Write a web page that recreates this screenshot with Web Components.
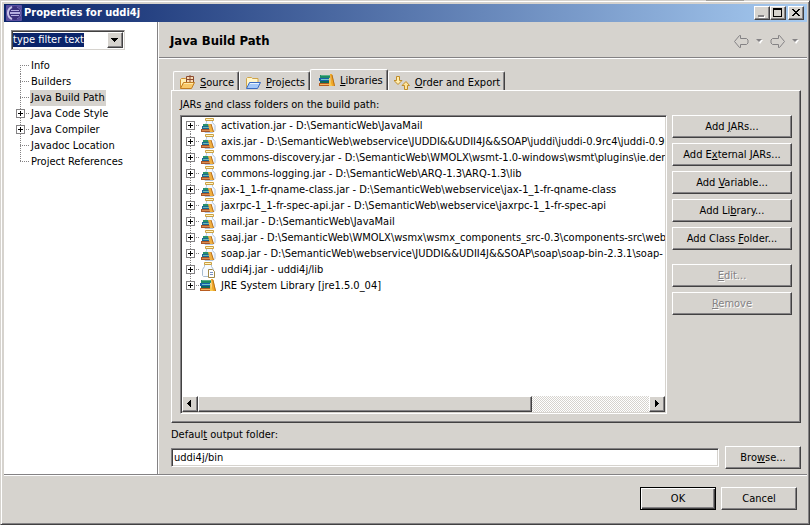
<!DOCTYPE html>
<html lang="en">
<head>
<meta charset="utf-8">
<title>Properties for uddi4j</title>
<style>
    :root {
        --face: #d6d3ce;
        --light: #ffffff;
        --shadow: #848284;
        --dark: #424142;
        --navy: #0a246a;
    }
    body {
        margin: 0;
        height: 100vh;
        overflow: hidden;
        background: var(--face);
        color: #000;
        font: 11px/16px "DejaVu Sans Condensed", "Noto Sans", sans-serif;
    }
</style>
</head>
<body>
<properties-dialog></properties-dialog>

<script>
const icons = {
    eclipse: `
        <rect width="16" height="16" rx="1" fill="#5a4fa0"/>
        <circle cx="9" cy="8" r="7" fill="#3a2f7c"/>
        <path d="M6 2a6.500 6.500 0 0 0 0 12" fill="none" stroke="#c8c2e8" stroke-width="2"/>
        <path d="M5 5h8v1H5zM4 7h10v2H4zM5 10h8v1H5z" fill="#b4aee0"/>
        <path d="M11 2a6.500 6.500 0 0 1 0 12" fill="none" stroke="#7a72b8"/>`,
    source: `
        <path d="M1.500 13V4.500l1-1h4l1 1H13v3" fill="#fff0b4" stroke="#d09030"/>
        <path d="M7.500 1.500h7v6h-7z" fill="#f8dcb4" stroke="#8c4a30"/>
        <path d="M11 0v8M7 4.500h8" stroke="#8c4a30"/>
        <path d="M1.500 13.500l3-6h11l-3 6z" fill="#f8c868" stroke="#c07c20"/>
        <path d="M5 8.500h9" stroke="#ffe8a8"/>`,
    project: `
        <path d="M1.500 13V3.500l1-1h4l1 1h5.500v4" fill="#fff6cc" stroke="#d0a448"/>
        <path d="M1.500 13.500l3-6h11l-3 6z" fill="#a4c8f8" stroke="#3c6cc0"/>
        <path d="M5 8.500h9" stroke="#e8f4ff"/>`,
    library: `
        <path d="M1 2h10v3H1z" fill="#1c8c64"/><path d="M2 2h9v1H2z" fill="#58b088"/>
        <path d="M0 5h10v3H0z" fill="#1860a8"/><path d="M2 6h8v1H2z" fill="#70c8c8"/>
        <path d="M1 8h10v2H1z" fill="#106858"/>
        <path d="M0 10h11v3H0z" fill="#b85c20"/><path d="M1 11h10v1H1z" fill="#f4b860"/>
        <path d="M11 1h2l3 12h-4z" fill="#f0a828"/><path d="M13 2l2.500 11" stroke="#b87018"/>
        <path d="M10 4l3 9h-3z" fill="#f8c850"/>`,
    order: `
        <path d="M2.500 1.500h3v4h2.500L4 9.500 0 5.500h2.500z" fill="#ffeeb0" stroke="#c08c28"/>
        <path d="M10.500 14.500h3v-4h2L12 6.500 8 10.500h2.500z" fill="#ffe49c" stroke="#c08c28"/>`,
    jar: `
        <path d="M6.500 2.500h6v2l2.500 3v5l-2 2h-8v-7l1.500-3z" fill="#f2f8ff" stroke="#b0c4dc"/>
        <path d="M5.500 .500h8v2h-8z" fill="#fff4c4" stroke="#cca040"/>
        <path d="M3 6h6v2H3z" fill="#28906c"/>
        <path d="M2 8h7v3H2z" fill="#1c6894"/><path d="M3 9h6v1H3z" fill="#6cb8b0"/>
        <path d="M1 11h9v3H1z" fill="#a85428"/><path d="M2 12h8v1H2z" fill="#d88c50"/>
        <path d="M8 6h3l3 8h-4z" fill="#f0b040"/><path d="M11 6l2.500 8" stroke="#b87020"/>`,
    jarfile: `
        <path d="M4.500 2.500h7v2l2 3v6l-1 1h-9l-1-1v-6l2-3z" fill="#f8fbff" stroke="#a8bcd0"/>
        <path d="M4.500 .500h7v2h-7z" fill="#fff4c8" stroke="#cca040"/>
        <path d="M8.500 7.500h4l2 2v6h-6z" fill="#fff" stroke="#a08848"/>
        <path d="M10 10.500h3M10 12.500h3" stroke="#7890c0"/>`
};

class PixelIcon extends HTMLElement {
    connectedCallback() {
        const shadowRoot = this.attachShadow({ mode: 'open' });
        shadowRoot.innerHTML = `
            <style>
                :host { display: block; flex: none; width: 16px; height: 16px; }
                svg { display: block; }
            </style>
            <svg width="16" height="16" viewBox="0 0 16 16" aria-hidden="true">${icons[this.getAttribute('name')]}</svg>`;
    }
}
customElements.define('pixel-icon', PixelIcon);

class PushButton extends HTMLElement {
    connectedCallback() {
        const shadowRoot = this.attachShadow({ mode: 'open' });
        shadowRoot.innerHTML = `
            <style>
                :host { display: block; }
                button {
                    display: block;
                    box-sizing: border-box;
                    width: 100%;
                    min-width: 76px;
                    height: 23px;
                    padding: 0 4px;
                    border: 1px solid;
                    border-color: var(--light) var(--dark) var(--dark) var(--light);
                    box-shadow: inset -1px -1px var(--shadow);
                    background: var(--face);
                    color: #000;
                    font: inherit;
                    white-space: nowrap;
                }
                button:disabled { color: var(--shadow); text-shadow: 1px 1px var(--light); }
                :host([default]) button {
                    border-color: #000;
                    box-shadow: inset 1px 1px var(--light), inset -1px -1px var(--dark), inset -2px -2px var(--shadow);
                }
            </style>
            <button type="button" ${this.hasAttribute('disabled') ? 'disabled' : ''}><slot></slot></button>`;
    }
}
customElements.define('push-button', PushButton);

class TitleBar extends HTMLElement {
    connectedCallback() {
        const shadowRoot = this.attachShadow({ mode: 'open' });
        shadowRoot.innerHTML = `
            <style>
                :host {
                    display: flex;
                    align-items: center;
                    height: 18px;
                    padding: 0 3px 0 2px;
                    background: linear-gradient(to right, #0a246a, #a6caf0);
                    color: #fff;
                }
                h1 { flex: 1; margin: 0 2px; font-size: 11px; line-height: 16px; }
                button {
                    width: 16px;
                    height: 14px;
                    padding: 0;
                    border: 1px solid;
                    border-color: var(--light) var(--dark) var(--dark) var(--light);
                    box-shadow: inset -1px -1px var(--shadow);
                    background: var(--face);
                }
                button:last-child { margin-left: 2px; }
                svg { display: block; }
            </style>
            <pixel-icon name="eclipse"></pixel-icon>
            <h1><slot></slot></h1>
            <button type="button" aria-label="Minimize"><svg width="14" height="12"><path d="M4 9h6v2H4z" fill="#fff"/><path d="M3 8h6v2H3z" fill="#848284"/></svg></button>
            <button type="button" aria-label="Maximize"><svg width="14" height="12"><path d="M2 1h9v9H2zM3 3v6h7V3z" fill-rule="evenodd"/></svg></button>
            <button type="button" aria-label="Close"><svg width="14" height="12" shape-rendering="crispEdges"><path d="M3 2h2v1h1v1h2V3h1V2h2v1h-1v1H9v1H8v1h1v1h1v1h1v1H9V8H8V7H6v1H5v1H3V8h1V7h1V6h1V5H5V4H4V3H3z"/></svg></button>`;
    }
}
customElements.define('title-bar', TitleBar);

class FilterCombo extends HTMLElement {
    connectedCallback() {
        const shadowRoot = this.attachShadow({ mode: 'open' });
        shadowRoot.innerHTML = `
            <style>
                :host {
                    display: flex;
                    align-items: center;
                    box-sizing: border-box;
                    width: 114px;
                    height: 20px;
                    padding: 1px;
                    border: 1px solid;
                    border-color: var(--shadow) var(--face) var(--face) var(--shadow);
                    box-shadow: inset 1px 1px var(--dark);
                    background: #fff;
                }
                /* the whole filter text is selected when the dialog opens */
                input {
                    field-sizing: content;
                    height: 14px;
                    padding: 0;
                    border: 0;
                    background: var(--navy);
                    color: #fff;
                    font: inherit;
                    outline: none;
                }
                button {
                    width: 16px;
                    height: 16px;
                    margin-left: auto;
                    padding: 0;
                    border: 1px solid;
                    border-color: var(--light) var(--dark) var(--dark) var(--light);
                    box-shadow: inset -1px -1px var(--shadow);
                    background: var(--face);
                }
                svg { display: block; }
            </style>
            <input type="text" value="type filter text" aria-label="Filter">
            <button type="button" aria-label="Show filters"><svg width="14" height="14"><path d="M3 5h7v1H3zM4 6h5v1H4zM5 7h3v1H5zM6 8h1v1H6z"/></svg></button>`;
    }
}
customElements.define('filter-combo', FilterCombo);

// One line of a tree: dotted connector, optional expander, optional icon, text
class TreeRow extends HTMLElement {
    connectedCallback() {
        const top = this.hasAttribute('first') ? 7 : 0;
        const bottom = this.hasAttribute('last') ? 8 : 16;
        const icon = this.getAttribute('icon');
        const plus = `
            <rect x=".500" y="3.500" width="8" height="8" fill="#fff" stroke="#848284"/>
            <path d="M2 7.500h5M4.500 5v5" stroke="#000"/>`;
        const shadowRoot = this.attachShadow({ mode: 'open' });
        shadowRoot.innerHTML = `
            <style>
                :host { display: flex; height: 16px; white-space: nowrap; }
                svg { display: block; flex: none; }
                pixel-icon { margin-right: 4px; }
                span { padding: 0 1px; }
                :host([selected]) span { background: var(--face); }
            </style>
            <svg width="14" height="16" aria-hidden="true">
                <path d="M4.500 ${top}V${bottom}M4 7.500h10" stroke="#848284" stroke-dasharray="1 1"/>
                ${this.hasAttribute('expandable') ? plus : ''}
            </svg>
            ${icon ? `<pixel-icon name="${icon}"></pixel-icon>` : ''}
            <span><slot></slot></span>`;
        this.setAttribute('role', 'treeitem');
    }
}
customElements.define('tree-row', TreeRow);

class HistoryNav extends HTMLElement {
    connectedCallback() {
        const shadowRoot = this.attachShadow({ mode: 'open' });
        shadowRoot.innerHTML = `
            <style>
                :host { display: flex; align-items: center; gap: 7px; }
                button { padding: 0; border: 0; background: none; }
                svg { display: block; }
            </style>
            <button type="button" aria-label="Back"><svg width="15" height="13"><path d="M.500 6.500l5-6h1v3h6l1.500 1.500v3l-1.500 1.500h-6v3h-1z" fill="none" stroke="#848284"/></svg></button>
            <button type="button" aria-label="Back history"><svg width="7" height="6"><path d="M2 2h5L4 6z" fill="#fff"/><path d="M0 1h6L3 4z" fill="#848284"/></svg></button>
            <button type="button" aria-label="Forward"><svg width="15" height="13"><path d="M14.500 6.500l-5-6h-1v3h-6L1 5v3l1.500 1.500h6v3h1z" fill="none" stroke="#848284"/></svg></button>
            <button type="button" aria-label="Forward history"><svg width="7" height="6"><path d="M2 2h5L4 6z" fill="#fff"/><path d="M0 1h6L3 4z" fill="#848284"/></svg></button>`;
    }
}
customElements.define('history-nav', HistoryNav);

class FolderTab extends HTMLElement {
    connectedCallback() {
        const shadowRoot = this.attachShadow({ mode: 'open' });
        shadowRoot.innerHTML = `
            <style>
                :host { display: block; }
                button {
                    display: flex;
                    align-items: center;
                    gap: 5px;
                    height: 19px;
                    padding: 4px 4px 0 5px;
                    border: 1px solid var(--light);
                    border-right-color: var(--dark);
                    border-bottom: 0;
                    border-radius: 2px 2px 0 0;
                    box-shadow: inset -1px 0 var(--shadow);
                    background: var(--face);
                    color: #000;
                    font: inherit;
                }
                :host([selected]) { margin-bottom: -1px; }
                :host([selected]) button { height: 22px; padding: 0 4px 0 8px; }
            </style>
            <button type="button" role="tab" aria-selected="${this.hasAttribute('selected')}">
                <pixel-icon name="${this.getAttribute('icon')}"></pixel-icon>
                <span><slot></slot></span>
            </button>`;
    }
}
customElements.define('folder-tab', FolderTab);

class TabFolder extends HTMLElement {
    connectedCallback() {
        const shadowRoot = this.attachShadow({ mode: 'open' });
        shadowRoot.innerHTML = `
            <style>
                :host { display: flex; flex-direction: column; min-height: 0; }
                .strip { display: flex; align-items: flex-end; padding-left: 2px; }
                .page {
                    flex: 1;
                    display: flex;
                    min-height: 0;
                    padding: 6px 8px 8px;
                    border: 1px solid;
                    border-color: var(--light) var(--dark) var(--dark) var(--light);
                    box-shadow: inset -1px -1px var(--shadow);
                }
                ::slotted(library-page) { flex: 1; min-width: 0; }
            </style>
            <div class="strip" role="tablist"><slot name="tab"></slot></div>
            <div class="page"><slot></slot></div>`;
    }
}
customElements.define('tab-folder', TabFolder);

class ScrollBar extends HTMLElement {
    connectedCallback() {
        const shadowRoot = this.attachShadow({ mode: 'open' });
        shadowRoot.innerHTML = `
            <style>
                :host {
                    display: flex;
                    height: 16px;
                    background: repeating-conic-gradient(#fff 0 25%, var(--face) 0 50%) 0 0 / 2px 2px;
                }
                button, .thumb {
                    box-sizing: border-box;
                    width: 16px;
                    padding: 0;
                    border: 1px solid;
                    border-color: var(--light) var(--dark) var(--dark) var(--light);
                    box-shadow: inset -1px -1px var(--shadow);
                    background: var(--face);
                }
                .track { flex: 1; display: flex; }
                .thumb { width: 74%; }
                svg { display: block; }
            </style>
            <button type="button" aria-label="Scroll left"><svg width="14" height="14"><path d="M8 3v7H7V9H6V8H5V7H4V6h1V5h1V4h1V3z"/></svg></button>
            <div class="track"><div class="thumb"></div></div>
            <button type="button" aria-label="Scroll right"><svg width="14" height="14"><path d="M5 3v7h1V9h1V8h1V7h1V6H8V5H7V4H6V3z"/></svg></button>`;
    }
}
customElements.define('scroll-bar', ScrollBar);

class LibraryPage extends HTMLElement {
    connectedCallback() {
        const shadowRoot = this.attachShadow({ mode: 'open' });
        shadowRoot.innerHTML = `
            <style>
                :host { display: flex; flex-direction: column; gap: 2px; }
                p { margin: 0; }
                .columns { flex: 1; display: flex; gap: 5px; min-height: 0; }
                .list {
                    flex: 1;
                    display: flex;
                    flex-direction: column;
                    min-width: 0;
                    border: 1px solid;
                    border-color: var(--shadow) var(--light) var(--light) var(--shadow);
                    box-shadow: inset 1px 1px var(--dark), inset -1px -1px var(--face);
                    padding: 1px;
                    background: #fff;
                }
                .rows { flex: 1; padding: 1px 0 0 4px; overflow: hidden; }
                .buttons { flex: none; display: flex; flex-direction: column; gap: 5px; width: 120px; }
                .apart { margin-top: 9px; }
            </style>
            <p id="caption">JARs <u>a</u>nd class folders on the build path:</p>
            <div class="columns">
                <div class="list">
                    <div class="rows" role="tree" aria-labelledby="caption"><slot></slot></div>
                    <scroll-bar></scroll-bar>
                </div>
                <div class="buttons">
                    <push-button>Add <u>J</u>ARs...</push-button>
                    <push-button>Add E<u>x</u>ternal JARs...</push-button>
                    <push-button>Add <u>V</u>ariable...</push-button>
                    <push-button>Add Li<u>b</u>rary...</push-button>
                    <push-button>Add Class <u>F</u>older...</push-button>
                    <push-button class="apart" disabled><u>E</u>dit...</push-button>
                    <push-button disabled><u>R</u>emove</push-button>
                </div>
            </div>`;
    }
}
customElements.define('library-page', LibraryPage);

class OutputFolder extends HTMLElement {
    connectedCallback() {
        const shadowRoot = this.attachShadow({ mode: 'open' });
        shadowRoot.innerHTML = `
            <style>
                :host { display: block; }
                label { display: block; margin-bottom: 3px; }
                div { display: flex; align-items: center; gap: 6px; }
                input {
                    flex: 1;
                    box-sizing: border-box;
                    min-width: 0;
                    height: 19px;
                    padding: 0 2px;
                    border: 1px solid;
                    border-color: var(--shadow) var(--light) var(--light) var(--shadow);
                    box-shadow: inset 1px 1px var(--dark), inset -1px -1px var(--face);
                    background: #fff;
                    color: #000;
                    font: inherit;
                }
            </style>
            <label for="folder">Defaul<u>t</u> output folder:</label>
            <div>
                <input id="folder" type="text" value="uddi4j/bin">
                <push-button>Bro<u>w</u>se...</push-button>
            </div>`;
    }
}
customElements.define('output-folder', OutputFolder);

const dialogTemplate = document.createElement('template');
dialogTemplate.innerHTML = `
<style>
    :host {
        display: flex;
        flex-direction: column;
        box-sizing: border-box;
        height: 100%;
        padding: 2px 2px 1px 3px;
        border: 1px solid;
        border-color: transparent var(--dark) var(--dark) var(--face);
        box-shadow: inset 1px 1px var(--light), inset -1px -1px var(--shadow);
        /* edge of the window behind */
        background: linear-gradient(#a5a29c, #a5a29c) right 66px top 0 / 38px 2px no-repeat border-box;
    }
    title-bar { margin-top: 1px; }
    main { flex: 1; display: flex; min-height: 0; }
    nav {
        flex: none;
        box-sizing: border-box;
        width: 154px;
        padding: 8px 7px;
        border-right: 1px solid var(--shadow);
        background: #fff;
    }
    .tree { padding: 8px 0 0 5px; }
    section {
        flex: 1;
        display: flex;
        flex-direction: column;
        min-width: 0;
        border-left: 1px solid var(--light);
    }
    header {
        display: flex;
        align-items: center;
        justify-content: space-between;
        height: 35px;
        padding: 0 8px 0 11px;
        border-bottom: 1px solid var(--shadow);
        box-shadow: 0 1px var(--light);
    }
    h2 { margin: 0; padding-top: 3px; font-size: 13px; line-height: 16px; }
    history-nav { padding-top: 3px; }
    tab-folder { flex: 1; margin: 11px 6px 4px 12px; }
    output-folder { margin: 0 6px 5px 12px; }
    footer {
        display: flex;
        justify-content: flex-end;
        gap: 5px;
        padding: 12px 10px 13px;
        border-top: 1px solid var(--shadow);
        box-shadow: inset 0 1px var(--light);
    }
</style>

<title-bar>Properties for uddi4j</title-bar>
<main>
    <nav>
        <filter-combo></filter-combo>
        <div class="tree" role="tree">
            <tree-row first>Info</tree-row>
            <tree-row>Builders</tree-row>
            <tree-row selected>Java Build Path</tree-row>
            <tree-row expandable>Java Code Style</tree-row>
            <tree-row expandable>Java Compiler</tree-row>
            <tree-row>Javadoc Location</tree-row>
            <tree-row last>Project References</tree-row>
        </div>
    </nav>
    <section>
        <header>
            <h2>Java Build Path</h2>
            <history-nav></history-nav>
        </header>
        <tab-folder>
            <folder-tab slot="tab" icon="source"><u>S</u>ource</folder-tab>
            <folder-tab slot="tab" icon="project"><u>P</u>rojects</folder-tab>
            <folder-tab slot="tab" icon="library" selected><u>L</u>ibraries</folder-tab>
            <folder-tab slot="tab" icon="order"><u>O</u>rder and Export</folder-tab>
            <library-page>
                <tree-row first expandable icon="jar">activation.jar - D:\\SemanticWeb\\JavaMail</tree-row>
                <tree-row expandable icon="jar">axis.jar - D:\\SemanticWeb\\webservice\\JUDDI&amp;&amp;UDII4J&amp;&amp;SOAP\\juddi\\juddi-0.9rc4\\juddi-0.9r</tree-row>
                <tree-row expandable icon="jar">commons-discovery.jar - D:\\SemanticWeb\\WMOLX\\wsmt-1.0-windows\\wsmt\\plugins\\ie.deri.w</tree-row>
                <tree-row expandable icon="jar">commons-logging.jar - D:\\SemanticWeb\\ARQ-1.3\\ARQ-1.3\\lib</tree-row>
                <tree-row expandable icon="jar">jax-1_1-fr-qname-class.jar - D:\\SemanticWeb\\webservice\\jax-1_1-fr-qname-class</tree-row>
                <tree-row expandable icon="jar">jaxrpc-1_1-fr-spec-api.jar - D:\\SemanticWeb\\webservice\\jaxrpc-1_1-fr-spec-api</tree-row>
                <tree-row expandable icon="jar">mail.jar - D:\\SemanticWeb\\JavaMail</tree-row>
                <tree-row expandable icon="jar">saaj.jar - D:\\SemanticWeb\\WMOLX\\wsmx\\wsmx_components_src-0.3\\components-src\\webs</tree-row>
                <tree-row expandable icon="jar">soap.jar - D:\\SemanticWeb\\webservice\\JUDDI&amp;&amp;UDII4J&amp;&amp;SOAP\\soap\\soap-bin-2.3.1\\soap-</tree-row>
                <tree-row expandable icon="jarfile">uddi4j.jar - uddi4j/lib</tree-row>
                <tree-row last expandable icon="library">JRE System Library [jre1.5.0_04]</tree-row>
            </library-page>
        </tab-folder>
        <output-folder></output-folder>
    </section>
</main>
<footer>
    <push-button default>OK</push-button>
    <push-button>Cancel</push-button>
</footer>
`;

class PropertiesDialog extends HTMLElement {
    connectedCallback() {
        const shadowRoot = this.attachShadow({ mode: 'open' });
        shadowRoot.appendChild(dialogTemplate.content.cloneNode(true));
    }
}
customElements.define('properties-dialog', PropertiesDialog);
</script>
</body>
</html>
